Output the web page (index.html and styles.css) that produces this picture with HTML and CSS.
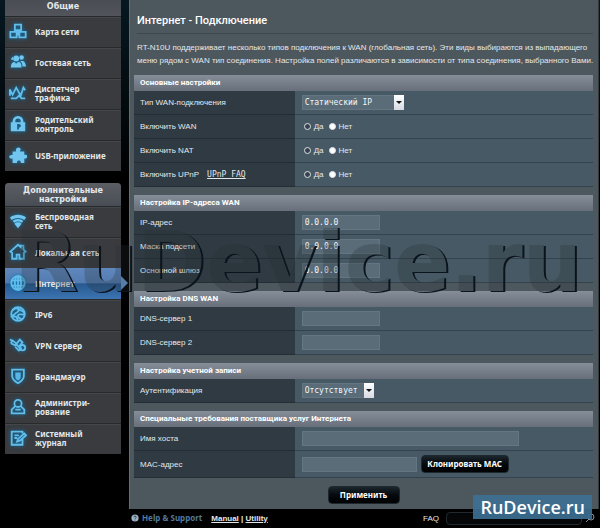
FILE: index.html
```html
<!DOCTYPE html>
<html lang="ru">
<head>
<meta charset="utf-8">
<meta name="viewport" content="width=device-width, initial-scale=1">
<title>Интернет - Подключение</title>
<link rel="stylesheet" href="styles.css">
</head>
<body>
<div class="layout">
  <nav class="sidebar">
    <section class="menu">
      <h2 class="menu-title">Общие</h2>
      <a class="item" href="#map"><svg class="icon" viewBox="0 0 20 20"><path d="M6.500 3h7v6h-7zM1.500 11h7v6h-7zM11.500 11h7v6h-7zM10 9v5M8 14h4"/></svg><span>Карта сети</span></a>
      <a class="item" href="#guest"><svg class="icon solid" viewBox="0 0 20 20"><circle cx="8" cy="6" r="3.300"/><circle cx="14" cy="5" r="2.500"/><path d="M2 16c0-4 2-6 4-6l2 2 2-2c3 0 4 2 4 6zM12 9h3c2 0 3 2 4 6h-4c0-3-1-5-3-6zM2 7l2-3 1 4z"/></svg><span>Гостевая сеть</span></a>
      <a class="item" href="#traffic"><svg class="icon" viewBox="0 0 20 20"><path d="M1 13V6l3 6 4-8 5 9 3-9 2 3M2 16h6l3-3 3 3h4"/></svg><span>Диспетчер<br>трафика</span></a>
      <a class="item" href="#parent"><svg class="icon solid" viewBox="0 0 20 20"><path fill-rule="evenodd" d="M2 8h2V7a6 6 0 0 1 12 0v1h2v10H2zM7 8h6V7a3 3 0 0 0-6 0zM9 10v6h2v-2c3 0 3-4 0-4z"/></svg><span>Родительский<br>контроль</span></a>
      <a class="item" href="#usb"><svg class="icon solid" viewBox="0 0 20 20"><path d="M4 6h4c-2-5 5-6 5-2l-1 2h5v4c5-2 4 5 0 4v5h-4c1-4-5-4-4 0H4v-5c-5 1-5-5 0-4z"/></svg><span>USB-приложение</span></a>
    </section>
    <section class="menu">
      <h2 class="menu-title tall">Дополнительные<br>настройки</h2>
      <a class="item" href="#wifi"><svg class="icon solid" viewBox="0 0 20 20"><path d="M1 6c5-4 13-4 18 0l-2 3c-4-3-10-3-14 0zM4 10c3-3 9-3 12 0l-2 2c-2-2-6-2-8 0zM6 13c2-2 6-2 8 0l-4 5z"/></svg><span>Беспроводная<br>сеть</span></a>
      <a class="item" href="#lan"><svg class="icon" viewBox="0 0 20 20"><path d="M1.500 9.500L10 2l3 2.500V3h3v4l2.500 2.500-2 1.500v6.500h-5V13h-3v4.500h-5V11z"/></svg><span>Локальная сеть</span></a>
      <a class="item active" href="#wan" aria-current="page"><svg class="icon" viewBox="0 0 20 20"><circle cx="10" cy="10" r="7.500"/><ellipse cx="10" cy="10" rx="3.500" ry="7.500"/><path d="M10 2v16M3 7h14M3 13h14"/></svg><span>Интернет</span></a>
      <a class="item" href="#ipv6"><svg class="icon" viewBox="0 0 20 20"><circle cx="10" cy="10" r="7.500"/><path d="M4 6c5-5 9 0 5 2s-3 5-6 3M10 3c0 4 6 2 7 6s-7-1-7 3 4 2 4 5M2 13h6l2 4"/></svg><span>IPv6</span></a>
      <a class="item" href="#vpn"><svg class="icon" viewBox="0 0 20 20"><path d="M1 4l3 1 5 4M2 8l6 3M4 5l-2 3M8 9l4-5 3 3-4 5zM7 12l4 4 3-3"/><circle cx="15" cy="13" r="3"/></svg><span>VPN сервер</span></a>
      <a class="item" href="#firewall"><svg class="icon" viewBox="0 0 20 20"><path d="M3.500 3h13v7c0 4-3 6-6.500 8-3.500-2-6.500-4-6.500-8z"/><path class="fill" d="M7 6h6v4c0 3-1 4-3 5-2-1-3-2-3-5z"/></svg><span>Брандмауэр</span></a>
      <a class="item" href="#admin"><svg class="icon" viewBox="0 0 20 20"><circle cx="10" cy="6" r="4"/><path d="M7 9l-4 4v4h14v-4l-4-4M7 13h6"/></svg><span>Администри-<br>рование</span></a>
      <a class="item" href="#log"><svg class="icon" viewBox="0 0 20 20"><path d="M15 11v6.500H3V3h12v2M6 7h5M6 10h3M9 14l1-3 7-6 2 2-7 6z"/></svg><span>Системный<br>журнал</span></a>
    </section>
  </nav>

  <div class="content">
    <main class="panel">
      <h1 class="title">Интернет - Подключение</h1>
      <p class="intro">RT-N10U поддерживает несколько типов подключения к WAN (глобальная сеть). Эти виды выбираются из выпадающего меню рядом с WAN тип соединения. Настройка полей различаются в зависимости от типа соединения, выбранного Вами.</p>
      <form class="form">
        <table class="settings">
          <colgroup><col class="names"><col></colgroup>
          <thead><tr><th colspan="2">Основные настройки</th></tr></thead>
          <tbody>
            <tr><th scope="row"><label for="type">Тип WAN-подключения</label></th><td><span class="drop"><select id="type" class="wide"><option>Статический IP</option></select></span></td></tr>
            <tr><th scope="row">Включить WAN</th><td><div class="radios"><label><input type="radio" name="wan">Да</label><label><input type="radio" name="wan" checked>Нет</label></div></td></tr>
            <tr><th scope="row">Включить NAT</th><td><div class="radios"><label><input type="radio" name="nat">Да</label><label><input type="radio" name="nat" checked>Нет</label></div></td></tr>
            <tr><th scope="row">Включить UPnP <a class="faq-link" href="#upnp">UPnP FAQ</a></th><td><div class="radios"><label><input type="radio" name="upnp">Да</label><label><input type="radio" name="upnp" checked>Нет</label></div></td></tr>
          </tbody>
        </table>
        <table class="settings">
          <colgroup><col class="names"><col></colgroup>
          <thead><tr><th colspan="2">Настройка IP-адреса WAN</th></tr></thead>
          <tbody>
            <tr><th scope="row"><label for="ip">IP-адрес</label></th><td><input class="field" id="ip" value="0.0.0.0"></td></tr>
            <tr><th scope="row"><label for="mask">Маска подсети</label></th><td><input class="field" id="mask" value="0.0.0.0"></td></tr>
            <tr><th scope="row"><label for="gate">Основной шлюз</label></th><td><input class="field" id="gate" value="0.0.0.0"></td></tr>
          </tbody>
        </table>
        <table class="settings">
          <colgroup><col class="names"><col></colgroup>
          <thead><tr><th colspan="2">Настройка DNS WAN</th></tr></thead>
          <tbody>
            <tr><th scope="row"><label for="dns1">DNS-сервер 1</label></th><td><input class="field" id="dns1"></td></tr>
            <tr><th scope="row"><label for="dns2">DNS-сервер 2</label></th><td><input class="field" id="dns2"></td></tr>
          </tbody>
        </table>
        <table class="settings">
          <colgroup><col class="names"><col></colgroup>
          <thead><tr><th colspan="2">Настройка учетной записи</th></tr></thead>
          <tbody>
            <tr><th scope="row"><label for="auth">Аутентификация</label></th><td><span class="drop"><select id="auth"><option>Отсутствует</option></select></span></td></tr>
          </tbody>
        </table>
        <table class="settings">
          <colgroup><col class="names"><col></colgroup>
          <thead><tr><th colspan="2">Специальные требования поставщика услуг Интернета</th></tr></thead>
          <tbody>
            <tr><th scope="row"><label for="host">Имя хоста</label></th><td><input class="field long" id="host"></td></tr>
            <tr class="roomy"><th scope="row"><label for="mac">MAC-адрес</label></th><td><div class="mac"><input class="field medium" id="mac"><button type="button" class="button clone">Клонировать MAC</button></div></td></tr>
          </tbody>
        </table>
        <button type="button" class="button apply">Применить</button>
      </form>
    </main>
    <footer class="footer">
      <svg class="help" viewBox="0 0 10 10"><circle cx="5" cy="5" r="4.500" fill="#9fb4c4"/><path d="M3.500 4c0-2 3-2 3 0 0 1-1.500 1-1.500 2M5 7v1" fill="none" stroke="#123"/></svg>
      <span class="support">Help &amp; Support</span>
      <span class="links"><a href="#manual">Manual</a> | <a href="#utility">Utility</a></span>
      <label class="faq" for="search">FAQ</label>
      <input class="search" id="search" type="text">
      <svg class="lens" viewBox="0 0 10 10"><circle cx="6" cy="4" r="3"/><path d="M4 6L1 9"/></svg>
      <div class="badge">RuDevice.ru</div>
    </footer>
  </div>

  <svg class="watermark" viewBox="0 0 600 80" aria-hidden="true">
    <mask id="edge"><rect width="600" height="80" fill="#fff"/><text x="14" y="63" fill="#000">RuDevice.ru</text></mask>
    <text x="14" y="63" class="mark-fill">RuDevice.ru</text>
    <g mask="url(#edge)"><text x="16" y="64" class="mark-edge">RuDevice.ru</text></g>
  </svg>
</div>
</body>
</html>
```
FILE: styles.css
```css
* { box-sizing: border-box; }

body {
  margin: 0;
  background: #000;
  color: #e3e8eb;
  font: 8px/13px "Liberation Sans", Arial, sans-serif;
}

h1, h2, p { margin: 0; }
a { color: inherit; }

.layout {
  position: relative;
  display: flex;
  gap: 8px;
  padding: 0 1px 0 5px;
  background: linear-gradient(#061821, #000) top left / 100% 180px no-repeat;
}

.sidebar {
  flex: 0 0 116px;
  display: flex;
  flex-direction: column;
  gap: 12px;
}

.menu { background: #393b3e; }
.menu:last-child { border-radius: 4px 4px 0 0; }

.menu-title {
  display: flex;
  align-items: center;
  justify-content: center;
  height: 16px;
  padding-bottom: 3px;
  background: linear-gradient(#4a4e54, #51545b);
  font: bold 8px/9px "DejaVu Sans", Verdana, sans-serif;
  text-align: center;
}

.menu-title.tall {
  height: 23px;
  padding: 0;
  border-radius: 4px 4px 0 0;
  background: linear-gradient(#5b5f64, #484c54);
}

.item {
  position: relative;
  display: flex;
  align-items: center;
  gap: 8px;
  height: 31px;
  padding: 0 0 2px 4px;
  border-top: 1px solid #27292b;
  box-shadow: inset 0 1px #44474a;
  font: bold 8px/9px "Noto Sans", Verdana, sans-serif;
  text-decoration: none;
  white-space: nowrap;
}

.item.active {
  background: linear-gradient(#5e87bd, #557cb0 45%, #27598f 50%, #3c75b3);
  border-color: #5e87bd;
  box-shadow: none;
}

.item.active::after {
  content: "";
  position: absolute;
  left: 100%;
  top: 7px;
  border: 7px solid transparent;
  border-left-color: #6798d2;
  border-right: 0;
}

.icon {
  flex: none;
  width: 18px;
  height: 18px;
  fill: none;
  stroke: #63bdea;
  stroke-width: 2;
  filter: drop-shadow(0 0 2px #0878b5);
}

.icon.solid { fill: #72c5ee; stroke: none; }
.icon .fill { fill: #58b5e4; stroke: none; }

.content { flex: 1; min-width: 0; }

.panel {
  padding: 12px 5px 5px 4px;
  border-left: 1px solid #656f73;
  border-right: 1px solid #333b40;
  background: #4d575e;
}

.title {
  margin-left: 3px;
  padding-bottom: 3px;
  border-bottom: 1px solid #3e474c;
  font: 500 11px/18px Roboto, Arial, sans-serif;
  color: #fff;
}

.intro { margin: 7px -5px 8px 3px; }

.form { display: flex; flex-direction: column; gap: 8px; }

.settings {
  width: 100%;
  border-collapse: separate;
  border-spacing: 0;
  table-layout: fixed;
  text-align: left;
}

.names { width: 35%; }

.settings thead th {
  height: 16px;
  padding: 0 6px;
  background: linear-gradient(#858e98, #686f7b);
  color: #fff;
  font: bold 8px/12px Roboto, Arial, sans-serif;
}

.settings tbody th {
  height: 24px;
  padding: 0 6px;
  border-bottom: 1px solid #252e35;
  background: #2f3a42;
  font-weight: normal;
}

.settings td {
  height: 24px;
  padding: 0 7px;
  border-bottom: 1px solid #33424c;
  background: #475964;
}

.settings .roomy > * { height: 27px; }

.faq-link {
  margin-left: 6px;
  font: 8px/12px "DejaVu Sans Mono", monospace;
}

.field, select {
  display: block;
  height: 15px;
  margin: 0;
  padding: 0 2px;
  border: 1px solid #637682;
  border-radius: 0;
  background: #596c78;
  color: #f3f6f8;
  font: 8px/13px "DejaVu Sans Mono", monospace;
}

.field { width: 78px; }
.field.medium { width: 115px; }
.field.long { width: 217px; }

.drop { position: relative; display: block; width: max-content; }

select { appearance: none; width: 72px; }
select.wide { width: 102px; }

.drop::before {
  content: "";
  position: absolute;
  top: 0;
  right: 0;
  width: 10px;
  height: 15px;
  background: linear-gradient(#fff, #d6dbe1);
}

.drop::after {
  content: "";
  position: absolute;
  top: 6px;
  right: 2px;
  border: 3px solid transparent;
  border-top-color: #111;
  border-bottom: 0;
}

.radios { display: flex; gap: 5px; padding-left: 2px; }
.radios label { display: flex; align-items: center; gap: 3px; }

.radios input {
  appearance: none;
  width: 7px;
  height: 7px;
  margin: 0;
  border: 1px solid #dce3e7;
  border-radius: 50%;
  background: #34434d;
}

.radios input:checked { background: #fff; }

.mac { display: flex; align-items: center; gap: 4px; }

.button {
  height: 18px;
  padding: 0;
  border: 1px solid #1d272e;
  border-radius: 4px;
  background: linear-gradient(#1b252b, #050a0e 50%, #000);
  color: #fff;
  font: bold 8px/12px "Noto Sans", Verdana, sans-serif;
  white-space: nowrap;
}

.clone { width: 88px; }
.apply { align-self: center; width: 72px; }

.footer {
  position: relative;
  display: flex;
  align-items: center;
  height: 18px;
  padding-left: 2px;
}

.help { width: 8px; height: 8px; margin-right: 3px; }

.support {
  color: #51799c;
  font: bold 8px/12px "Noto Sans", Verdana, sans-serif;
}

.links { margin-left: 9px; font-weight: bold; }
.faq { margin-left: auto; margin-right: 7px; }

.search {
  width: 136px;
  height: 13px;
  border: 1px solid #22282c;
  border-radius: 4px;
  background: #050607;
  color: #fff;
}

.lens {
  width: 10px;
  height: 10px;
  margin: 0 4px 0 3px;
  fill: none;
  stroke: #8196a2;
}

.badge {
  position: absolute;
  right: 7px;
  bottom: 8px;
  padding: 0 7px;
  background: rgba(61, 111, 145, .92);
  color: #fff;
  font: 600 18px/24px "Open Sans", "Noto Sans", sans-serif;
}

.watermark {
  position: absolute;
  top: 228px;
  left: 0;
  width: 100%;
  pointer-events: none;
  font: bold 83px "DejaVu Sans", Verdana, sans-serif;
}

.mark-fill { fill: rgba(38, 45, 50, .26); }
.mark-edge { fill: #0b131c; }
```
